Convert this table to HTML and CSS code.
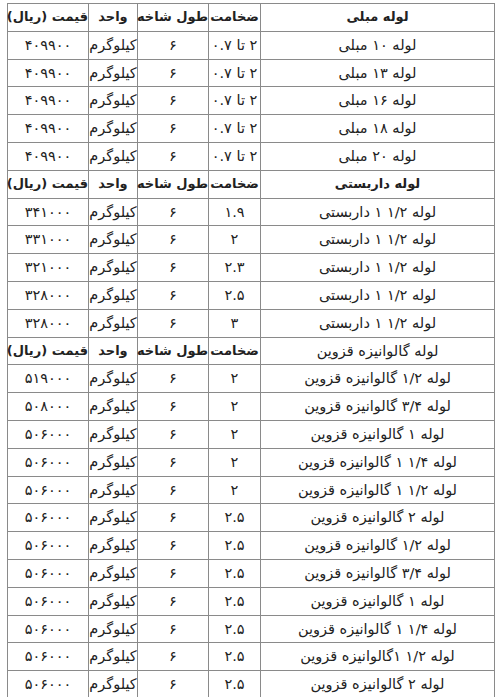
FILE: index.html
```html
<!DOCTYPE html>
<html lang="fa" dir="rtl">
<head>
<meta charset="utf-8">
<title>قیمت لوله</title>
<link rel="stylesheet" href="styles.css">
</head>
<body>
<table class="price-table">
  <colgroup>
    <col class="c-name">
    <col class="c-thick">
    <col class="c-len">
    <col class="c-unit">
    <col class="c-price">
  </colgroup>
  <tbody>
    <tr class="head"><td>لوله مبلی</td><td>ضخامت</td><td>طول شاخه</td><td>واحد</td><td>قیمت (ریال)</td></tr>
    <tr><td>لوله ۱۰ مبلی</td><td>۲ تا ۰.۷</td><td>۶</td><td>کیلوگرم</td><td>۴۰۹۹۰۰</td></tr>
    <tr><td>لوله ۱۳ مبلی</td><td>۲ تا ۰.۷</td><td>۶</td><td>کیلوگرم</td><td>۴۰۹۹۰۰</td></tr>
    <tr><td>لوله ۱۶ مبلی</td><td>۲ تا ۰.۷</td><td>۶</td><td>کیلوگرم</td><td>۴۰۹۹۰۰</td></tr>
    <tr><td>لوله ۱۸ مبلی</td><td>۲ تا ۰.۷</td><td>۶</td><td>کیلوگرم</td><td>۴۰۹۹۰۰</td></tr>
    <tr><td>لوله ۲۰ مبلی</td><td>۲ تا ۰.۷</td><td>۶</td><td>کیلوگرم</td><td>۴۰۹۹۰۰</td></tr>
    <tr class="head"><td>لوله داربستی</td><td>ضخامت</td><td>طول شاخه</td><td>واحد</td><td>قیمت (ریال)</td></tr>
    <tr><td>لوله ۱/۲ ۱ داربستی</td><td>۱.۹</td><td>۶</td><td>کیلوگرم</td><td>۳۴۱۰۰۰</td></tr>
    <tr><td>لوله ۱/۲ ۱ داربستی</td><td>۲</td><td>۶</td><td>کیلوگرم</td><td>۳۳۱۰۰۰</td></tr>
    <tr><td>لوله ۱/۲ ۱ داربستی</td><td>۲.۳</td><td>۶</td><td>کیلوگرم</td><td>۳۲۱۰۰۰</td></tr>
    <tr><td>لوله ۱/۲ ۱ داربستی</td><td>۲.۵</td><td>۶</td><td>کیلوگرم</td><td>۳۲۸۰۰۰</td></tr>
    <tr><td>لوله ۱/۲ ۱ داربستی</td><td>۳</td><td>۶</td><td>کیلوگرم</td><td>۳۲۸۰۰۰</td></tr>
    <tr class="head"><td class="plain">لوله گالوانیزه قزوین</td><td>ضخامت</td><td>طول شاخه</td><td>واحد</td><td>قیمت (ریال)</td></tr>
    <tr><td>لوله ۱/۲ گالوانیزه قزوین</td><td>۲</td><td>۶</td><td>کیلوگرم</td><td>۵۱۹۰۰۰</td></tr>
    <tr><td>لوله ۳/۴ گالوانیزه قزوین</td><td>۲</td><td>۶</td><td>کیلوگرم</td><td>۵۰۸۰۰۰</td></tr>
    <tr><td>لوله ۱ گالوانیزه قزوین</td><td>۲</td><td>۶</td><td>کیلوگرم</td><td>۵۰۶۰۰۰</td></tr>
    <tr><td>لوله ۱/۴ ۱ گالوانیزه قزوین</td><td>۲</td><td>۶</td><td>کیلوگرم</td><td>۵۰۶۰۰۰</td></tr>
    <tr><td>لوله ۱/۲ ۱ گالوانیزه قزوین</td><td>۲</td><td>۶</td><td>کیلوگرم</td><td>۵۰۶۰۰۰</td></tr>
    <tr><td>لوله ۲ گالوانیزه قزوین</td><td>۲.۵</td><td>۶</td><td>کیلوگرم</td><td>۵۰۶۰۰۰</td></tr>
    <tr><td>لوله ۱/۲ گالوانیزه قزوین</td><td>۲.۵</td><td>۶</td><td>کیلوگرم</td><td>۵۰۶۰۰۰</td></tr>
    <tr><td>لوله ۳/۴ گالوانیزه قزوین</td><td>۲.۵</td><td>۶</td><td>کیلوگرم</td><td>۵۰۶۰۰۰</td></tr>
    <tr><td>لوله ۱ گالوانیزه قزوین</td><td>۲.۵</td><td>۶</td><td>کیلوگرم</td><td>۵۰۶۰۰۰</td></tr>
    <tr><td>لوله ۱/۴ ۱ گالوانیزه قزوین</td><td>۲.۵</td><td>۶</td><td>کیلوگرم</td><td>۵۰۶۰۰۰</td></tr>
    <tr><td>لوله ۱/۲ ۱گالوانیزه قزوین</td><td>۲.۵</td><td>۶</td><td>کیلوگرم</td><td>۵۰۶۰۰۰</td></tr>
    <tr><td>لوله ۲ گالوانیزه قزوین</td><td>۲.۵</td><td>۶</td><td>کیلوگرم</td><td>۵۰۶۰۰۰</td></tr>
  </tbody>
</table>
</body>
</html>
```

FILE: styles.css
```css
html, body {
  margin: 0;
  padding: 0;
  background: #ffffff;
}

body {
  font-family: "DejaVu Sans", "Noto Sans", sans-serif;
  font-size: 14.5px;
  color: #222222;
  direction: rtl;
}

.price-table {
  border-collapse: collapse;
  table-layout: fixed;
  width: 488px;
  margin: 3px 4px 0 7px;
}

.c-name { width: 234px; }
.c-thick { width: 52px; }
.c-len { width: 71px; }
.c-unit { width: 49px; }
.c-price { width: 81px; }

.price-table td {
  border: 1px solid #8a8a8a;
  padding: 0;
  height: 26.8px;
  line-height: 26.8px;
  text-align: center;
  white-space: nowrap;
  vertical-align: middle;
}

.price-table tr.head td {
  font-weight: bold;
  font-size: 13px;
}

.price-table tr.head td.plain {
  font-weight: normal;
  font-size: 14.5px;
}
```
